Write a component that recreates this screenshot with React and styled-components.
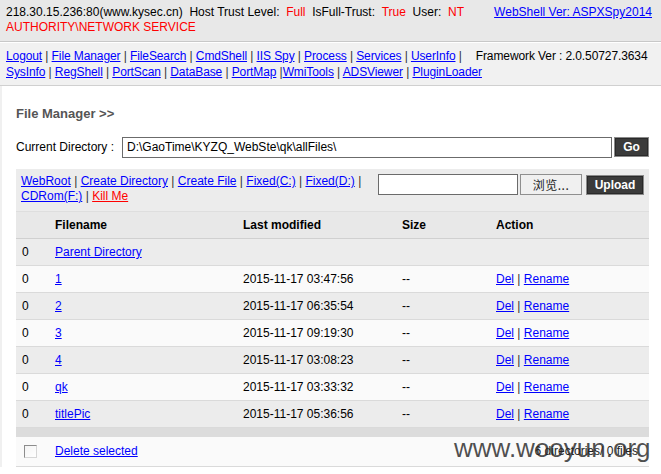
import React from "react";
import styled, { createGlobalStyle } from "styled-components";

const Global = createGlobalStyle`
  html, body { margin: 0; padding: 0; background: #fff; }
  body { font-family: "Liberation Sans", Arial, sans-serif; font-size: 12px; color: #000; }
  a { color: #0000ff; text-decoration: underline; }
`;

const Page = styled.div`
  width: 661px;
  height: 474px;
  overflow: hidden;
  position: relative;
`;

const Header = styled.div`
  display: flex;
  align-items: flex-start;
  background: #e8e8e8;
  border-bottom: 1px solid #c8c8c8;
  padding: 5px 9px 6px 6px;
  line-height: 15px;
  height: 30px;
`;

const HeaderInfo = styled.div`
  flex: 1;
  padding-right: 20px;
`;

const Red = styled.span`
  color: #ff0000;
`;

const VerLink = styled.a`
  white-space: nowrap;
`;

const Nav = styled.div`
  background: #f1f1f1;
  border-bottom: 1px solid #d0d0d0;
  margin-top: 1px;
  padding: 5px 0 5px 6px;
  line-height: 16px;
  height: 32px;
`;

const NavLine = styled.div`
  white-space: nowrap;
  letter-spacing: -0.1px;
`;

const Framework = styled.span`
  margin-left: 14px;
`;

const Sep = styled.span`
  color: #333;
`;

const Main = styled.div`
  padding: 20px 12px 0 16px;
  border-left: 2px solid #f0f0f0;
`;

const Title = styled.div`
  font-size: 13px;
  font-weight: bold;
  color: #555;
  line-height: 16px;
  margin-left: -2px;
`;

const DirRow = styled.div`
  display: flex;
  align-items: center;
  margin-top: 14px;
  margin-left: -2px;
  height: 22px;
`;

const DirLabel = styled.span`
  width: 106px;
`;

const TextBox = styled.div`
  box-sizing: border-box;
  width: ${(p) => p.$w}px;
  height: 21px;
  border: 1px solid #6b6b6b;
  background: #fff;
  padding: 0 4px;
  line-height: 19px;
  white-space: nowrap;
  overflow: hidden;
`;

const DarkButton = styled.div`
  box-sizing: border-box;
  width: ${(p) => p.$w}px;
  height: 20px;
  margin-left: ${(p) => p.$ml}px;
  background: #3b3b3b;
  border: 1px solid #8a8a8a;
  box-shadow: inset 0 0 0 1px #2a2a2a;
  color: #fff;
  font-weight: bold;
  font-size: 12px;
  display: flex;
  align-items: center;
  justify-content: center;
`;

const Toolbar = styled.div`
  display: flex;
  align-items: flex-start;
  background: #ececec;
  margin-top: 11px;
  margin-left: -2px;
  height: 42px;
  padding: 5px 5px 0 5px;
  box-sizing: border-box;
`;

const ToolLinks = styled.div`
  width: 358px;
  line-height: 15px;
`;

const KillLink = styled.a`
  color: #ff0000;
`;

const UploadForm = styled.div`
  display: flex;
  align-items: center;
  margin-left: 2px;
`;

const BrowseButton = styled.div`
  box-sizing: border-box;
  width: 62px;
  height: 21px;
  margin-left: 2px;
  background: #f0f0f0;
  border: 1px solid #8f8f8f;
  font-family: "Noto Sans CJK SC", "Liberation Sans", sans-serif;
  font-size: 12px;
  color: #222;
  display: flex;
  align-items: center;
  justify-content: center;
  letter-spacing: 0.5px;
`;

const Table = styled.table`
  border-collapse: collapse;
  width: 633px;
  margin-left: -2px;
  table-layout: fixed;
`;

const HeadRow = styled.tr`
  background: #e8e8e8;
  border-top: 1px solid #dedede;
  border-bottom: 1px solid #d0d0d0;
  height: 27px;
`;

const Th = styled.th`
  text-align: left;
  font-weight: bold;
  padding: 0 0 0 6px;
  font-size: 12px;
`;

const Row = styled.tr`
  background: ${(p) => (p.$alt ? "#ececec" : "#fafafa")};
  border-bottom: 1px solid #dadada;
  height: 27px;
`;

const Td = styled.td`
  padding: 0 0 0 6px;
  white-space: nowrap;
`;

const GapRow = styled.tr`
  background: #dcdcdc;
  height: 9px;
`;

const FootRow = styled.tr`
  background: #fafafa;
  border-bottom: 1px solid #dadada;
  height: 30px;
`;

const Check = styled.span`
  display: inline-block;
  box-sizing: border-box;
  width: 13px;
  height: 13px;
  margin-left: 2px;
  vertical-align: middle;
  border: 1px solid #8c8c8c;
  border-right-color: #d6d6d6;
  border-bottom-color: #d6d6d6;
  background: linear-gradient(135deg, #f4f4f4, #fff);
`;

const Summary = styled.td`
  text-align: right;
  padding-right: 11px;
  color: #222;
`;

const Watermark = styled.div`
  position: absolute;
  left: 454px;
  top: 433px;
  font-family: "Liberation Sans", Arial, sans-serif;
  font-size: 26px;
  color: rgba(40, 40, 40, 0.82);
  pointer-events: none;
`;

const navLine1 = ["Logout", "File Manager", "FileSearch", "CmdShell", "IIS Spy", "Process", "Services", "UserInfo"];

const files = [
  { name: "1", time: "2015-11-17 03:47:56" },
  { name: "2", time: "2015-11-17 06:35:54" },
  { name: "3", time: "2015-11-17 09:19:30" },
  { name: "4", time: "2015-11-17 03:08:23" },
  { name: "qk", time: "2015-11-17 03:33:32" },
  { name: "titlePic", time: "2015-11-17 05:36:56" },
];

const L = ({ children }) => <a href="#">{children}</a>;

export default function App() {
  return (
    <Page>
      <Global />
      <Header>
        <HeaderInfo>
          218.30.15.236:80(www.kysec.cn)&nbsp;&nbsp;Host Trust Level:&nbsp;&nbsp;<Red>Full</Red>&nbsp;&nbsp;IsFull-Trust:&nbsp;&nbsp;<Red>True</Red>&nbsp;&nbsp;User:&nbsp;&nbsp;<Red>NT AUTHORITY\NETWORK SERVICE</Red>
        </HeaderInfo>
        <VerLink href="#">WebShell Ver: ASPXSpy2014</VerLink>
      </Header>
      <Nav>
        <NavLine>
          {navLine1.map((n, i) => (
            <React.Fragment key={n}>
              <L>{n}</L> <Sep>|</Sep>{i < navLine1.length - 1 ? " " : ""}
            </React.Fragment>
          ))}
          <Framework>Framework Ver : 2.0.50727.3634</Framework>
        </NavLine>
        <NavLine>
          <L>SysInfo</L> <Sep>|</Sep> <L>RegShell</L> <Sep>|</Sep> <L>PortScan</L> <Sep>|</Sep> <L>DataBase</L> <Sep>|</Sep> <L>PortMap</L> <Sep>|</Sep><L>WmiTools</L> <Sep>|</Sep> <L>ADSViewer</L> <Sep>|</Sep> <L>PluginLoader</L>
        </NavLine>
      </Nav>
      <Main>
        <Title>File Manager &gt;&gt;</Title>
        <DirRow>
          <DirLabel>Current Directory :</DirLabel>
          <TextBox $w={490}>D:\GaoTime\KYZQ_WebSte\qk\allFiles\</TextBox>
          <DarkButton $w={35} $ml={2}>Go</DarkButton>
        </DirRow>
        <Toolbar>
          <ToolLinks>
            <L>WebRoot</L> <Sep>|</Sep> <L>Create Directory</L> <Sep>|</Sep> <L>Create File</L> <Sep>|</Sep> <L>Fixed(C:)</L> <Sep>|</Sep> <L>Fixed(D:)</L> <Sep>|</Sep> <L>CDRom(F:)</L> <Sep>|</Sep> <KillLink href="#">Kill Me</KillLink>
          </ToolLinks>
          <UploadForm>
            <TextBox $w={140} />
            <BrowseButton>浏览...</BrowseButton>
            <DarkButton $w={58} $ml={4}>Upload</DarkButton>
          </UploadForm>
        </Toolbar>
        <Table>
          <colgroup>
            <col style={{ width: 33 }} />
            <col style={{ width: 188 }} />
            <col style={{ width: 159 }} />
            <col style={{ width: 94 }} />
            <col />
          </colgroup>
          <tbody>
            <HeadRow>
              <Th></Th>
              <Th>Filename</Th>
              <Th>Last modified</Th>
              <Th>Size</Th>
              <Th>Action</Th>
            </HeadRow>
            <Row $alt>
              <Td>0</Td>
              <Td><L>Parent Directory</L></Td>
              <Td></Td>
              <Td></Td>
              <Td></Td>
            </Row>
            {files.map((f, i) => (
              <Row key={f.name} $alt={i % 2 === 1}>
                <Td>0</Td>
                <Td><L>{f.name}</L></Td>
                <Td>{f.time}</Td>
                <Td>--</Td>
                <Td><L>Del</L> <Sep>|</Sep> <L>Rename</L></Td>
              </Row>
            ))}
            <GapRow><td colSpan={5}></td></GapRow>
            <FootRow>
              <Td><Check /></Td>
              <Td><L>Delete selected</L></Td>
              <Summary colSpan={3}>6 directories/ 0 files</Summary>
            </FootRow>
          </tbody>
        </Table>
      </Main>
      <Watermark>www.wooyun.org</Watermark>
    </Page>
  );
}
